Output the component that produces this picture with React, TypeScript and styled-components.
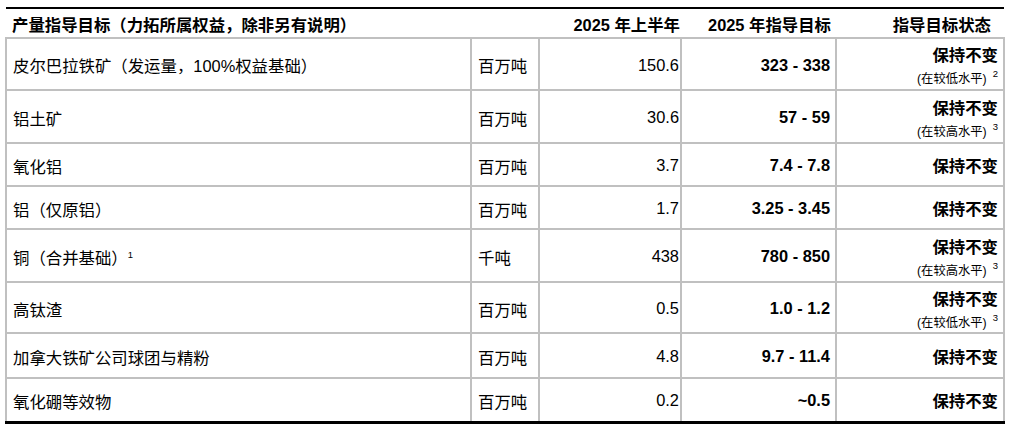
import styled, { createGlobalStyle } from "styled-components";

const GlobalStyle = createGlobalStyle`
    html, body {
        margin: 0;
        padding: 0;
        background: #ffffff;
    }
    body {
        font-family: "Liberation Sans", "Noto Sans CJK SC", sans-serif;
        color: #000;
    }
`;

const Wrap = styled.div`
    padding: 7px 0 0 5px;
`;

const Table = styled.table`
    width: 998px;
    border-collapse: collapse;
    table-layout: fixed;
    font-size: 16.4px;
`;

const HeadRow = styled.tr`
    height: 30px;
    border-top: 2px solid #000;
    border-bottom: 2px solid #000;
`;

const Th = styled.th<{ $align?: string; $padRight?: number }>`
    font-weight: bold;
    text-align: ${(p) => p.$align || "right"};
    padding: 2px ${(p) => p.$padRight ?? 5}px 0 6px;
    vertical-align: middle;
    white-space: nowrap;
`;

const Row = styled.tr<{ $h: number }>`
    height: ${(p) => p.$h}px;
`;

const Td = styled.td<{ $align?: string; $bold?: boolean; $padRight?: number; $padTop?: number }>`
    border: 2px solid #c0c0c0;
    text-align: ${(p) => p.$align || "right"};
    font-weight: ${(p) => (p.$bold ? "bold" : "normal")};
    padding: ${(p) => p.$padTop ?? 2}px ${(p) => p.$padRight ?? 5}px 0 6px;
    vertical-align: middle;
    white-space: nowrap;
`;

const LastRow = styled(Row)`
    border-bottom: 3px solid #000;
`;

const Sup = styled.sup<{ $gap?: number }>`
    font-size: 9.5px;
    font-weight: normal;
    line-height: 0;
    vertical-align: 6px;
    margin-left: ${(p) => p.$gap ?? 4}px;
`;

const Status = styled.div`
    display: flex;
    flex-direction: column;
    align-items: flex-end;
    line-height: 20px;
`;

const Note = styled.span`
    font-size: 12.3px;
    font-weight: normal;
    line-height: 16px;
    margin-top: 6px;
`;

type Item = {
    name: string;
    nameSup?: string;
    unit: string;
    half: string;
    target: string;
    note?: string;
    noteSup?: string;
    h: number;
};

const items: Item[] = [
    { name: "皮尔巴拉铁矿（发运量，100%权益基础）", unit: "百万吨", half: "150.6", target: "323 - 338", note: "(在较低水平)", noteSup: "2", h: 52 },
    { name: "铝土矿", unit: "百万吨", half: "30.6", target: "57 - 59", note: "(在较高水平)", noteSup: "3", h: 53 },
    { name: "氧化铝", unit: "百万吨", half: "3.7", target: "7.4 - 7.8", h: 43 },
    { name: "铝（仅原铝）", unit: "百万吨", half: "1.7", target: "3.25 - 3.45", h: 43 },
    { name: "铜（合并基础）", nameSup: "1", unit: "千吨", half: "438", target: "780 - 850", note: "(在较高水平)", noteSup: "3", h: 53 },
    { name: "高钛渣", unit: "百万吨", half: "0.5", target: "1.0 - 1.2", note: "(在较低水平)", noteSup: "3", h: 51 },
    { name: "加拿大铁矿公司球团与精粉", unit: "百万吨", half: "4.8", target: "9.7 - 11.4", h: 45 },
    { name: "氧化硼等效物", unit: "百万吨", half: "0.2", target: "~0.5", h: 44 },
];

export default function App() {
    return (
        <Wrap>
            <GlobalStyle />
            <Table>
                <colgroup>
                    <col style={{ width: 465 }} />
                    <col style={{ width: 68 }} />
                    <col style={{ width: 142 }} />
                    <col style={{ width: 155 }} />
                    <col style={{ width: 168 }} />
                </colgroup>
                <thead>
                    <HeadRow>
                        <Th $align="left">产量指导目标（力拓所属权益，除非另有说明）</Th>
                        <Th />
                        <Th $padRight={1}>2025 年上半年</Th>
                        <Th>2025 年指导目标</Th>
                        <Th $padRight={13}>指导目标状态</Th>
                    </HeadRow>
                </thead>
                <tbody>
                    {items.map((it, i) => {
                        const R = i === items.length - 1 ? LastRow : Row;
                        return (
                            <R key={it.name} $h={it.h}>
                                <Td $align="left">
                                    {it.name}
                                    {it.nameSup && <Sup $gap={0}>{it.nameSup}</Sup>}
                                </Td>
                                <Td $align="left">{it.unit}</Td>
                                <Td $padRight={1}>{it.half}</Td>
                                <Td $bold>{it.target}</Td>
                                <Td $bold $padTop={it.note ? 4 : 2}>
                                    <Status>
                                        <span>保持不变</span>
                                        {it.note && (
                                            <Note>
                                                {it.note}
                                                <Sup $gap={6}>{it.noteSup}</Sup>
                                            </Note>
                                        )}
                                    </Status>
                                </Td>
                            </R>
                        );
                    })}
                </tbody>
            </Table>
        </Wrap>
    );
}
